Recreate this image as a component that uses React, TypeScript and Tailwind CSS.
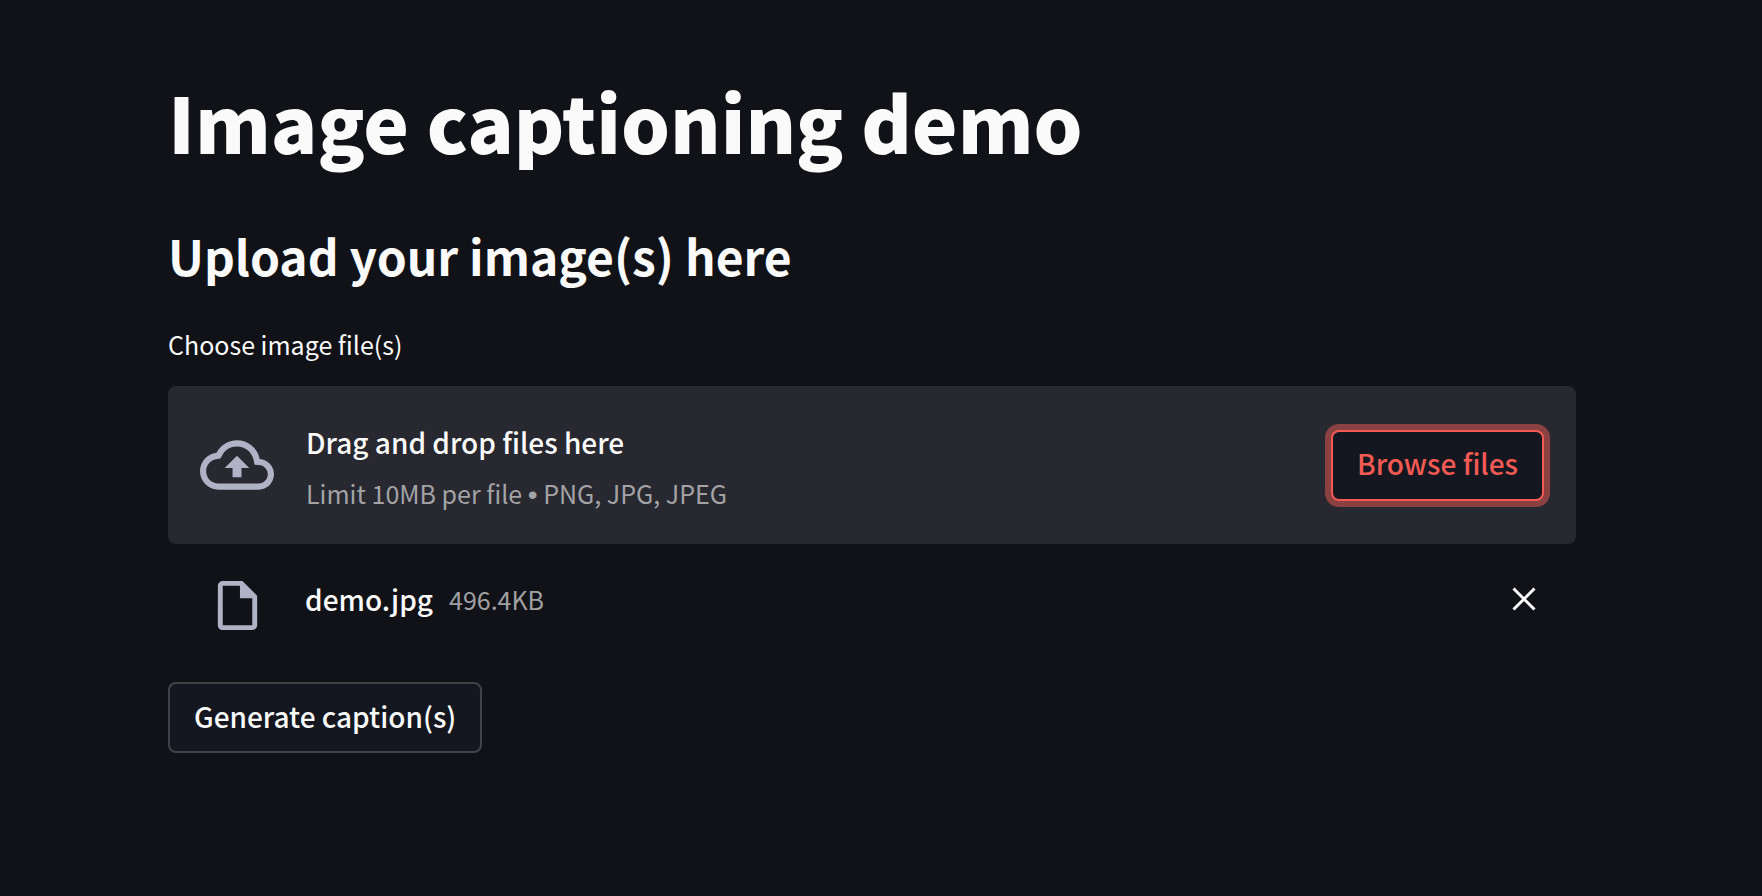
import { useId, useRef } from "react";

function CloudUploadIcon() {
  return (
    <svg viewBox="0 0 24 24" className="size-[74px] shrink-0 fill-[#b0b2c5]" aria-hidden="true">
      <path d="M19.35 10.04A7.49 7.49 0 0 0 12 4C9.11 4 6.6 5.64 5.35 8.04A5.994 5.994 0 0 0 0 14c0 3.31 2.69 6 6 6h13c2.76 0 5-2.24 5-5 0-2.64-2.05-4.78-4.65-4.96zM19 18H6c-2.21 0-4-1.79-4-4 0-2.05 1.53-3.76 3.56-3.97l1.07-.11.5-.95A5.469 5.469 0 0 1 12 6c2.62 0 4.88 1.86 5.39 4.43l.3 1.5 1.53.11A2.98 2.98 0 0 1 22 15c0 1.65-1.35 3-3 3zM8 13h2.55v3h2.9v-3H16l-4-4z" />
    </svg>
  );
}

function FileIcon() {
  return (
    <svg viewBox="0 0 24 24" className="size-[59px] shrink-0 fill-[#b0b2c5]" aria-hidden="true">
      <path d="M14 2H6c-1.1 0-1.99.9-1.99 2L4 20c0 1.1.89 2 1.99 2H18c1.1 0 2-.9 2-2V8l-6-6zM6 20V4h7v5h5v11H6z" />
    </svg>
  );
}

function CloseIcon() {
  return (
    <svg viewBox="0 0 24 24" className="size-6 stroke-[#fafafa]" fill="none" strokeWidth="3" aria-hidden="true">
      <path d="M1.5 1.5l21 21M22.5 1.5l-21 21" />
    </svg>
  );
}

export default function App() {
  const inputId = useId();
  const inputRef = useRef<HTMLInputElement>(null);

  return (
    <div className="min-h-screen bg-[#111217] pr-[18px] font-['Noto_Sans_CJK_SC',sans-serif] text-[28px] leading-[48px] font-medium text-[#fafafa]">
      <main className="mx-auto flex max-w-[1408px] flex-col pt-[73px] pb-16">
        <h1 className="text-[77px] leading-[96px] font-black">Image captioning demo</h1>
        <h2 className="mt-[54px] text-[48px] leading-[64px] font-bold">Upload your image(s) here</h2>

        <label htmlFor={inputId} className="mt-[37px] text-[25px] leading-[40px] font-normal">
          Choose image file(s)
        </label>
        <section className="mt-[22px] flex items-center gap-8 rounded-lg bg-[#272830] px-8 py-8">
          <CloudUploadIcon />
          <div className="grow">
            <p>Drag and drop files here</p>
            <p className="pt-2 text-[25px] leading-[38px] font-normal text-[#a3a3a6]">
              Limit 10MB per file <span className="font-['Liberation_Sans'] text-[28px] leading-none">•</span> PNG, JPG, JPEG
            </p>
          </div>
          <input ref={inputRef} id={inputId} type="file" multiple accept=".png,.jpg,.jpeg" className="sr-only" />
          <button
            type="button"
            onClick={() => inputRef.current?.click()}
            className="h-[71px] shrink-0 rounded-lg border-2 border-[#f25a54] bg-[#14171f] px-6 pb-1 text-[#f25a54] ring-6 ring-[#8b4142]"
          >
            Browse files
          </button>
        </section>

        <ul className="pt-[31px] pr-10 pl-10">
          <li className="flex items-center">
            <FileIcon />
            <span className="ml-[38px] pb-3">demo.jpg</span>
            <span className="ml-4 grow pb-3 text-[25px] font-normal text-[#a0a0a3]">496.4KB</span>
            <button type="button" aria-label="Remove demo.jpg" className="pb-3">
              <CloseIcon />
            </button>
          </li>
        </ul>

        <button
          type="button"
          className="mt-[47px] h-[71px] self-start rounded-lg border-2 border-[#414349] bg-[#14171f] px-6 pb-1"
        >
          Generate caption(s)
        </button>
      </main>
    </div>
  );
}
